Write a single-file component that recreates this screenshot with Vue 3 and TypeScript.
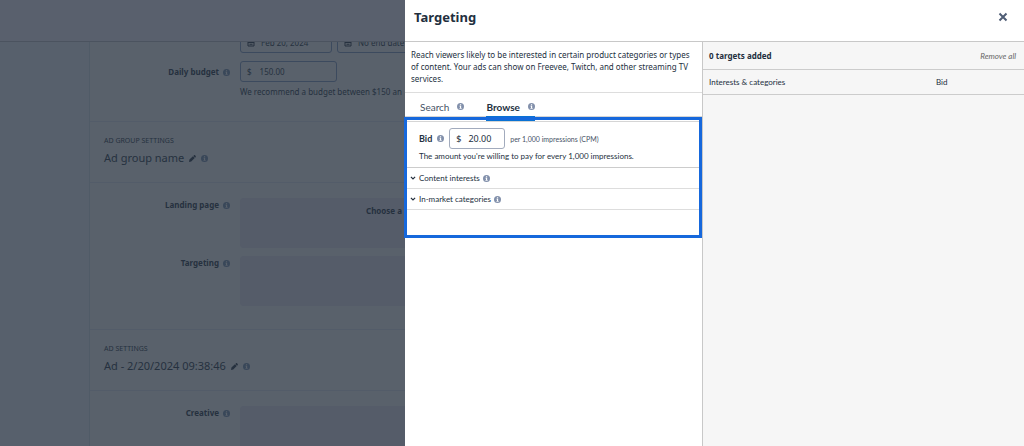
<script setup lang="ts">
import { h, ref } from 'vue'

type Tab = 'Search' | 'Browse'

const tabs: Tab[] = ['Search', 'Browse']
const activeTab = ref<Tab>('Browse')
const bid = ref('20.00')
const budget = ref('150.00')
const startDate = ref('Feb 20, 2024')
const endDate = ref('No end date')
const groups = ['Content interests', 'In-market categories']

const InfoIcon = () =>
  h('svg', { class: 'info', viewBox: '0 0 16 16', 'aria-hidden': 'true' }, [
    h('circle', { cx: 8, cy: 8, r: 8, fill: 'currentColor' }),
    h('path', { class: 'info-mark', d: 'M6.7 2.8h2.8v2.3H6.7zM5.6 6.3h3.9v5h1.2v1.6H5.6v-1.6h1.2V7.9H5.6z' }),
  ])

const PencilIcon = () =>
  h('svg', { class: 'pencil', viewBox: '0 0 16 16', 'aria-hidden': 'true' }, [
    h('path', { fill: 'currentColor', d: 'M0 16l1-6 8-7 4 4-8 8zM10 2l1.500-1.300c.8-.6 1.600-.6 2.300 0l1.500 1.500c.6.7.6 1.500 0 2.200L14 6z' }),
  ])

const CalendarIcon = () =>
  h('svg', { class: 'calendar', viewBox: '0 0 16 16', 'aria-hidden': 'true' }, [
    h('path', { fill: 'none', stroke: 'currentColor', 'stroke-width': 2, d: 'M2 3h12v11H2zM2 7h12M5 1v3M11 1v3M5 10.500h6' }),
  ])
</script>

<template>
  <div class="page">
    <div class="backdrop-page">
      <header class="top-bar"></header>
      <main class="card">
        <section class="form first">
          <div class="row dates">
            <div class="row-field date-pair">
              <label class="box date"><CalendarIcon /><input v-model="startDate" aria-label="Start date" /></label>
              <label class="box date"><CalendarIcon /><input v-model="endDate" aria-label="End date" /></label>
            </div>
          </div>
          <div class="row">
            <label class="row-label" for="budget">Daily budget <InfoIcon /></label>
            <div class="row-field">
              <div class="box budget"><span>$</span><input id="budget" v-model="budget" /></div>
              <p class="hint">We recommend a budget between $150 an</p>
            </div>
          </div>
        </section>
        <section class="heading">
          <p class="eyebrow">AD GROUP SETTINGS</p>
          <h2>Ad group name <PencilIcon /><InfoIcon /></h2>
        </section>
        <section class="form">
          <div class="row">
            <span class="row-label">Landing page <InfoIcon /></span>
            <div class="row-field well"><b>Choose a</b></div>
          </div>
          <div class="row">
            <span class="row-label">Targeting <InfoIcon /></span>
            <div class="row-field well"></div>
          </div>
        </section>
        <section class="heading">
          <p class="eyebrow">AD SETTINGS</p>
          <h2>Ad - 2/20/2024 09:38:46 <PencilIcon /><InfoIcon /></h2>
        </section>
        <section class="form">
          <div class="row">
            <span class="row-label">Creative <InfoIcon /></span>
            <div class="row-field well"></div>
          </div>
        </section>
      </main>
    </div>

    <aside class="drawer" role="dialog" aria-labelledby="drawer-title">
      <header class="drawer-head">
        <h1 id="drawer-title">Targeting</h1>
        <button class="close" aria-label="Close">
          <svg viewBox="0 0 10 10"><path d="M1.500 1.500l7 7M8.500 1.500l-7 7" /></svg>
        </button>
      </header>
      <div class="drawer-body">
        <section class="picker">
          <p class="intro">Reach viewers likely to be interested in certain product categories or types of content. Your ads can show on Freevee, Twitch, and other streaming TV services.</p>
          <nav class="tabs">
            <button
              v-for="tab in tabs"
              :key="tab"
              :class="{ active: tab === activeTab }"
              @click="activeTab = tab"
            >{{ tab }} <InfoIcon /></button>
          </nav>
          <div class="browse">
            <div class="bid">
              <div class="bid-line">
                <label for="bid">Bid</label>
                <InfoIcon />
                <div class="box bid-box"><span>$</span><input id="bid" v-model="bid" /></div>
                <small>per 1,000 impressions (CPM)</small>
              </div>
              <p>The amount you're willing to pay for every 1,000 impressions.</p>
            </div>
            <button v-for="group in groups" :key="group" class="group">
              <svg class="chevron" viewBox="0 0 10 10"><path d="M1.500 3l3.500 3.500L8.500 3" /></svg>
              {{ group }} <InfoIcon />
            </button>
            <div class="highlight"></div>
          </div>
        </section>
        <section class="added">
          <div class="added-head">
            <strong>0 targets added</strong>
            <button>Remove all</button>
          </div>
          <table>
            <thead><tr><th>Interests &amp; categories</th><th>Bid</th></tr></thead>
          </table>
        </section>
      </div>
    </aside>
  </div>
</template>

<style>
body { margin: 0; }
</style>

<style scoped>
.page {
  position: relative;
  height: 100vh;
  overflow: hidden;
  font: 8px/12px "Noto Sans", "Open Sans", sans-serif;
  color: #232f3e;
}
h1, h2, p { margin: 0; }
button { border: 0; background: none; padding: 0; margin: 0; font: inherit; color: inherit; cursor: pointer; }
input { border: 0; background: none; padding: 0; min-width: 0; width: 100%; font: inherit; color: inherit; outline: 0; }
.page :deep(.info) { width: 7px; height: 7px; flex: none; color: #8290ab; }
.page :deep(.info-mark) { fill: #fff; }
.box { box-sizing: border-box; display: flex; align-items: center; border: 1px solid #a2abbd; border-radius: 3px; }

/* Dimmed campaign form */
.backdrop-page {
  height: 100%;
  display: flex;
  flex-direction: column;
  background: #57606c;
  color: #26313f;
}
.top-bar { flex: none; height: 41px; background: #59606d; border-bottom: 1px solid #4b535f; }
.card { flex: 1; min-height: 0; overflow: hidden; margin-left: 89px; border-left: 1px solid #505b67; background: #59616b; }
.card section { border-bottom: 1px solid #535c69; }
.card :deep(.info) { color: #394759; }
.card :deep(.info-mark) { fill: #59616b; }
.row { display: grid; grid-template-columns: 140px 1fr; column-gap: 10px; }
.row-field { grid-column: 2; }
.row-label { display: flex; align-items: center; justify-content: flex-end; gap: 4px; height: 12px; font-weight: 700; }
.form { box-sizing: border-box; padding: 15px 0 23px; display: grid; row-gap: 8px; }
.form .row-label { margin-top: 1px; }
.first { padding: 0 0 23px; margin-top: -10px; }
.first .row-label { margin-top: 5px; }
.card .box { border-color: #3c4a5e; }
.date-pair { display: flex; gap: 5px; }
.date { width: 92px; height: 21px; gap: 6px; padding: 0 6px; }
.card :deep(.calendar) { flex: none; width: 8px; height: 8px; }
.budget { width: 97px; height: 21px; gap: 8px; padding: 0 6px; }
.hint { margin-top: 4px; white-space: nowrap; }
.heading { padding: 13px 14px 16px; }
.eyebrow { font-size: 7px; line-height: 12px; }
h2 { display: flex; align-items: center; gap: 5px; margin-top: 3px; font-size: 11px; line-height: 16px; font-weight: 400; }
h2 :deep(.pencil) { width: 7px; height: 7px; }
.well { box-sizing: border-box; height: 50px; padding: 7px 0 0 126px; border-radius: 4px; background: #555c69; white-space: nowrap; }

/* Drawer */
.drawer {
  position: absolute;
  inset: 0 0 0 405px;
  display: flex;
  flex-direction: column;
  background: #fff;
}
.drawer-head { flex: none; height: 41px; box-sizing: border-box; padding: 0 16px 7px 9px; display: flex; align-items: center; justify-content: space-between; }
h1 { font-size: 13px; line-height: 18px; font-weight: 700; }
.close { display: flex; }
.close svg { width: 10px; height: 10px; fill: none; stroke: #4f5d75; stroke-width: 2; }
.drawer-body { flex: 1; display: grid; grid-template-columns: 12fr 13fr; border-top: 1px solid #c8c8c8; }
.intro { padding: 7px 6px; border-bottom: 1px solid #ddd; }
.tabs { display: flex; gap: 22px; height: 23px; padding: 0 15px; font: 10px/12px Lato, sans-serif; border-bottom: 1px solid #d5d5d5; }
.tabs button { display: flex; align-items: center; gap: 8px; padding-top: 4px; color: #475366; }
.tabs .active { color: #232f3e; font-weight: 700; box-shadow: 0 6px #0972d3; }
.browse { position: relative; box-sizing: border-box; height: 121px; padding-top: 4px; font-family: Lato, sans-serif; }
.highlight { position: absolute; inset: 0 0 0 -1px; border: 3px solid #1668dc; pointer-events: none; }
.bid { padding: 6px 14px 5px; border-top: 1px solid #d5d5d5; border-bottom: 1px solid #ccc; }
.bid-line { display: flex; align-items: center; gap: 5px; }
.bid-line label { font: 700 9px/12px Lato, sans-serif; }
.bid-box { width: 56px; height: 21px; padding: 0 6px; gap: 7px; font: 9px/12px "Noto Sans", sans-serif; }
small { font-size: 7px; color: #475366; }
.bid p { margin-top: 1px; }
.group { display: flex; align-items: center; gap: 3px; width: 100%; height: 21px; padding-left: 5px; border-bottom: 1px solid #ddd; }
.chevron { width: 6px; height: 6px; fill: none; stroke: #232f3e; stroke-width: 2; }
.added { background: #f6f6f6; border-left: 1px solid #c8c8c8; }
.added-head { display: flex; align-items: center; justify-content: space-between; height: 26px; padding: 1px 8px 0 6px; border-bottom: 1px solid #ccc; }
.added-head button { font: italic 8px/12px Lato, sans-serif; color: #666; }
table { width: 100%; border-collapse: collapse; table-layout: fixed; }
th { height: 24px; padding: 0 0 0 6px; text-align: left; font: 8px/12px Lato, sans-serif; border-bottom: 1px solid #ccc; }
th:last-child { width: 88px; }
</style>
